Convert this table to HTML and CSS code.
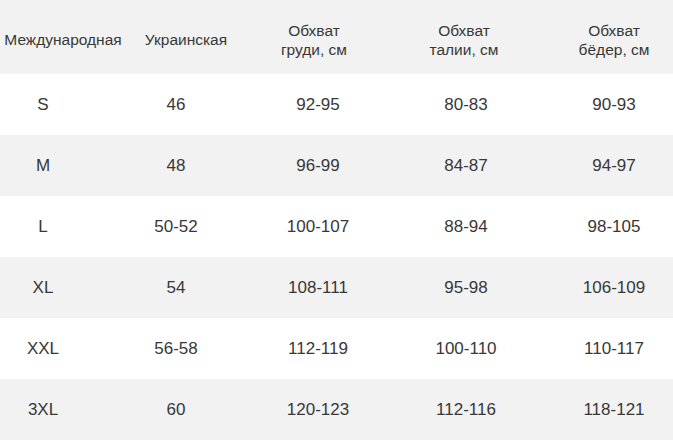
FILE: index.html
```html
<!DOCTYPE html>
<html lang="ru">
<head>
<meta charset="utf-8">
<link rel="stylesheet" href="styles.css">
</head>
<body>
<div class="table">
  <div class="head">
    <div class="hc">Международная</div>
    <div class="hc">Украинская</div>
    <div class="hc">Обхват<br>груди, см</div>
    <div class="hc">Обхват<br>талии, см</div>
    <div class="hc last">Обхват<br>бёдер, см</div>
  </div>
  <div class="row"><div>S</div><div>46</div><div>92-95</div><div>80-83</div><div>90-93</div></div>
  <div class="row alt"><div>M</div><div>48</div><div>96-99</div><div>84-87</div><div>94-97</div></div>
  <div class="row"><div>L</div><div>50-52</div><div>100-107</div><div>88-94</div><div>98-105</div></div>
  <div class="row alt"><div>XL</div><div>54</div><div>108-111</div><div>95-98</div><div>106-109</div></div>
  <div class="row"><div>XXL</div><div>56-58</div><div>112-119</div><div>100-110</div><div>110-117</div></div>
  <div class="row alt"><div>3XL</div><div>60</div><div>120-123</div><div>112-116</div><div>118-121</div></div>
</div>
</body>
</html>
```
FILE: styles.css
```css
html, body {
  margin: 0;
  padding: 0;
  background: #ffffff;
  overflow: hidden;
}
body {
  font-family: "Liberation Sans", Arial, sans-serif;
  color: #383838;
}
.table {
  width: 673px;
}
.head {
  display: grid;
  grid-template-columns: 126px 120px 136px 164px 127px;
  height: 74px;
  align-items: center;
  background: #f2f2f2;
  font-size: 15.5px;
  line-height: 19px;
}
.hc {
  text-align: center;
  white-space: nowrap;
  padding-top: 5px;
}
.hc.last {
  padding-left: 9px;
}
.row {
  display: grid;
  grid-template-columns: 86px 180px 104px 192px 104px;
  height: 61px;
  align-items: center;
  font-size: 17px;
}
.row > div {
  text-align: center;
}
.row.alt {
  background: #f2f2f2;
}
```
